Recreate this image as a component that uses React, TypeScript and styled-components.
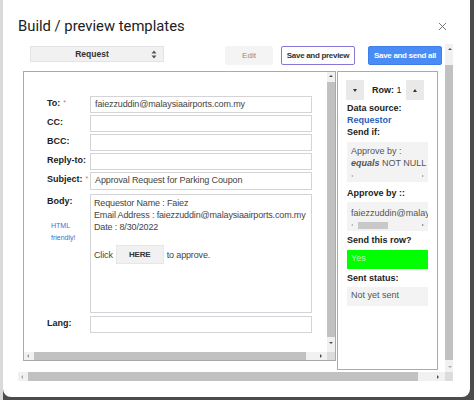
import styled, { createGlobalStyle } from 'styled-components';
import { X } from 'lucide-react';

const GlobalStyle = createGlobalStyle`
  html, body { margin: 0; padding: 0; }
  body {
    background: #4c4c4c;
    font-family: "Liberation Sans", Arial, sans-serif;
  }
`

type Dir = 'up' | 'down' | 'left' | 'right';

const Page = styled.div`
  width: 474px;
  height: 400px;
  overflow: hidden;
  display: flex;
  background: linear-gradient(to right, #d9d9d9 0 3px, #4c4c4c 3px);
`
const Dialog = styled.div`
  margin-left: 3px;
  width: 467px;
  height: 397px;
  background: #fff;
  border-radius: 0 0 8px 8px;
  display: flex;
  flex-direction: column;
`
const Header = styled.div`
  height: 44px;
  box-sizing: border-box;
  padding: 8px 21px 0 15px;
  display: flex;
  align-items: center;
  justify-content: space-between;
`
const Title = styled.div`
  font-family: Roboto, "Liberation Sans", sans-serif;
  font-size: 14.8px;
  color: #202124;
`
const Close = styled.div`
  display: flex;
  color: #5f6368;
`

const ScrollFrame = styled.div`
  margin-left: 15px;
  width: 435px;
  height: 337px;
  display: grid;
  grid-template-columns: 427px 8px;
  grid-template-rows: 328px 9px;
`
const Content = styled.div`
  padding-top: 2px;
  overflow: hidden;
`
const Toolbar = styled.div`
  display: flex;
  align-items: flex-start;
  height: 19px;
`
const Select = styled.div`
  margin-left: 12px;
  width: 134px;
  height: 16px;
  box-sizing: border-box;
  background: #f1f1f1;
  border: 1px solid #e3e3e3;
  display: flex;
  align-items: center;
  font-size: 8.5px;
  font-weight: bold;
  color: #333;
`
const SelectText = styled.span`
  flex: 1;
  text-align: center;
  padding-left: 2px;
`
const Spinner = styled.svg`
  margin-right: 6px;
`
const Button = styled.div<{ $kind: 'plain' | 'outline' | 'primary'; $gap: number }>`
  margin-left: ${p => p.$gap}px;
  width: ${p => (p.$kind === 'plain' ? 48 : 74)}px;
  height: 19px;
  box-sizing: border-box;
  display: flex;
  align-items: center;
  justify-content: center;
  font-size: 8px;
  letter-spacing: ${p => (p.$kind === 'plain' ? 0 : -0.3)}px;
  font-weight: ${p => (p.$kind === 'plain' ? 'normal' : 'bold')};
  color: ${p => (p.$kind === 'plain' ? '#8a8a8a' : p.$kind === 'primary' ? '#fff' : '#333')};
  background: ${p => (p.$kind === 'plain' ? '#f4f4f4' : p.$kind === 'primary' ? '#4a8cf5' : '#fff')};
  border: 1px solid ${p => (p.$kind === 'plain' ? '#f4f4f4' : p.$kind === 'primary' ? '#3f7fe8' : '#8579d6')};
  border-radius: 2px;
  white-space: nowrap;
`
const Panels = styled.div`
  margin-top: 6px;
  padding-left: 5px;
  display: flex;
  align-items: flex-start;
`

const LeftPanel = styled.div`
  width: 313px;
  height: 290px;
  box-sizing: border-box;
  border: 1px solid #aaa;
  display: grid;
  grid-template-columns: 303px 8px;
  grid-template-rows: 280px 8px;
`
const Form = styled.div`
  padding: 24px 0 0 23px;
  display: flex;
  flex-direction: column;
  gap: 2px;
  overflow: hidden;
`
const Row = styled.div<{ $top?: number }>`
  display: flex;
  margin-top: ${p => p.$top ?? 0}px;
`
const LabelCol = styled.div`
  width: 43px;
  display: flex;
  flex-direction: column;
`
const Label = styled.div`
  font-size: 9px;
  font-weight: bold;
  color: #222;
  line-height: 14px;
  white-space: nowrap;
`
const Req = styled.span`
  color: #e06666;
  font-weight: normal;
  font-size: 7px;
  vertical-align: top;
  margin-left: 3px;
`
const Hint = styled.div`
  margin-top: 12px;
  padding-left: 4px;
  font-size: 7px;
  line-height: 12px;
  color: #3b6fd6;
`
const Input = styled.div<{ $h?: number }>`
  width: 222px;
  height: ${p => p.$h ?? 17}px;
  box-sizing: border-box;
  border: 1px solid #d3d3d8;
  padding: 0 4px;
  font-size: 9px;
  letter-spacing: -0.12px;
  line-height: 15px;
  color: #444;
  white-space: nowrap;
  overflow: hidden;
`
const BodyBox = styled.div`
  width: 222px;
  height: 119px;
  box-sizing: border-box;
  border: 1px solid #d3d3d8;
  padding: 2px 3px;
  font-size: 9px;
  letter-spacing: -0.15px;
  line-height: 12px;
  color: #444;
  white-space: nowrap;
  overflow: hidden;
`
const ClickRow = styled.div`
  margin-top: 12px;
  display: flex;
  align-items: center;
`
const HereBtn = styled.span`
  margin: 0 3px;
  width: 48px;
  height: 19px;
  display: inline-flex;
  align-items: center;
  justify-content: center;
  background: #f1f1f1;
  border: 1px solid #e6e6e6;
  box-sizing: border-box;
  font-size: 8px;
  font-weight: bold;
  color: #333;
`

const RightPanel = styled.div`
  margin-left: 1px;
  width: 101px;
  height: 299px;
  box-sizing: border-box;
  border: 1px solid #aaa;
  padding: 8px 9px 0 9px;
  display: flex;
  flex-direction: column;
`
const Nav = styled.div`
  display: flex;
  align-items: center;
  margin-left: -1px;
`
const NavBtn = styled.div`
  flex: none;
  width: 18px;
  height: 20px;
  background: #e9e9e9;
  display: flex;
  align-items: center;
  justify-content: center;
`
const RowText = styled.div`
  margin: 0 4px 0 8px;
  font-size: 9px;
  color: #222;
  white-space: nowrap;
  b { font-weight: bold; }
`
const Field = styled.div<{ $top?: number; $blue?: boolean }>`
  margin-top: ${p => p.$top ?? 0}px;
  font-size: 9px;
  font-weight: bold;
  line-height: 12px;
  color: ${p => (p.$blue ? '#1f5fbf' : '#222')};
  white-space: nowrap;
`
const Box = styled.div<{ $top?: number; $pad?: number; $green?: boolean }>`
  margin-top: ${p => p.$top ?? 3}px;
  background: ${p => (p.$green ? '#00ff00' : '#f3f3f3')};
  padding: ${p => p.$pad ?? 0}px 4px 2px 4px;
  font-size: 9px;
  line-height: 12px;
  color: ${p => (p.$green ? '#bff7bf' : '#555')};
  white-space: nowrap;
  overflow: hidden;
`
const Single = styled.div`
  height: 17px;
  line-height: 17px;
`
const MiniScroll = styled.div<{ $top: number }>`
  margin-top: ${p => p.$top}px;
  height: 8px;
  display: flex;
  align-items: center;
`
const MiniThumb = styled.div`
  margin-left: 5px;
  width: 30px;
  height: 7px;
  background: #c8c8c8;
`
const Grow = styled.div`
  flex: 1;
`

const Track = styled.div<{ $vertical?: boolean }>`
  background: #f1f1f1;
  display: flex;
  flex-direction: ${p => (p.$vertical ? 'column' : 'row')};
  align-items: ${p => (p.$vertical ? 'stretch' : 'center')};
`
const ArrowBox = styled.div<{ $size?: number }>`
  flex: none;
  width: ${p => p.$size ?? 8}px;
  height: ${p => p.$size ?? 8}px;
  display: flex;
  align-items: center;
  justify-content: center;
`
const Thumb = styled.div<{ $vertical?: boolean; $len: number; $before: number }>`
  flex: none;
  background: #c1c1c1;
  ${p =>
    p.$vertical
      ? `height: ${p.$len}px; margin-top: ${p.$before}px;`
      : `width: ${p.$len}px; height: 100%; margin-left: ${p.$before}px;`}
`
const Corner = styled.div`
  background: #dcdcdc;
`
const Tri = styled.span<{ $dir: Dir; $color?: string; $s?: number }>`
  width: 0;
  height: 0;
  border: ${p => p.$s ?? 2.5}px solid transparent;
  ${p => {
    const c = p.$color ?? '#505050';
    const s = (p.$s ?? 2.5) + 0.5;
    if (p.$dir === 'up') return `border-top: 0; border-bottom: ${s}px solid ${c};`;
    if (p.$dir === 'down') return `border-bottom: 0; border-top: ${s}px solid ${c};`;
    if (p.$dir === 'left') return `border-left: 0; border-right: ${s}px solid ${c};`;
    return `border-right: 0; border-left: ${s}px solid ${c};`;
  }}
`

const App = () => {
  return (
    <>
      <GlobalStyle />
      <Page>
        <Dialog>
          <Header>
            <Title>Build / preview templates</Title>
            <Close><X size={13} strokeWidth={1.6} /></Close>
          </Header>

          <ScrollFrame>
            <Content>
              <Toolbar>
                <Select>
                  <SelectText>Request</SelectText>
                  <Spinner width="6" height="9" viewBox="0 0 6 9">
                    <path d="M3 0.5 L5.5 3.5 H0.5 Z M3 8.5 L5.5 5.5 H0.5 Z" fill="#555" />
                  </Spinner>
                </Select>
                <Button $kind="plain" $gap={61}>Edit</Button>
                <Button $kind="outline" $gap={8}>Save and preview</Button>
                <Button $kind="primary" $gap={13}>Save and send all</Button>
              </Toolbar>

              <Panels>
                <LeftPanel>
                  <Form>
                    <Row>
                      <LabelCol><Label>To:<Req>*</Req></Label></LabelCol>
                      <Input>faiezzuddin@malaysiaairports.com.my</Input>
                    </Row>
                    <Row>
                      <LabelCol><Label>CC:</Label></LabelCol>
                      <Input />
                    </Row>
                    <Row>
                      <LabelCol><Label>BCC:</Label></LabelCol>
                      <Input />
                    </Row>
                    <Row>
                      <LabelCol><Label>Reply-to:</Label></LabelCol>
                      <Input />
                    </Row>
                    <Row>
                      <LabelCol><Label>Subject:<Req>*</Req></Label></LabelCol>
                      <Input $h={18}>Approval Request for Parking Coupon</Input>
                    </Row>
                    <Row $top={2}>
                      <LabelCol>
                        <Label>Body:</Label>
                        <Hint>HTML<br />friendly!</Hint>
                      </LabelCol>
                      <BodyBox>
                        <div>Requestor Name : Faiez</div>
                        <div>Email Address : faiezzuddin@malaysiaairports.com.my</div>
                        <div>Date : 8/30/2022</div>
                        <ClickRow>
                          Click <HereBtn>HERE</HereBtn> to approve.
                        </ClickRow>
                      </BodyBox>
                    </Row>
                    <Row $top={1}>
                      <LabelCol><Label>Lang:</Label></LabelCol>
                      <Input />
                    </Row>
                  </Form>
                  <Track $vertical>
                    <ArrowBox><Tri $dir="up" $s={2} /></ArrowBox>
                    <Thumb $vertical $len={255} $before={2} />
                    <ArrowBox style={{ marginTop: 2 }}><Tri $dir="down" $s={2} /></ArrowBox>
                  </Track>
                  <Track>
                    <ArrowBox><Tri $dir="left" $s={2} $color="#999" /></ArrowBox>
                    <Thumb $len={272} $before={2} />
                    <Grow />
                    <ArrowBox><Tri $dir="right" $s={2} /></ArrowBox>
                    <div style={{ width: 2 }} />
                  </Track>
                  <Corner />
                </LeftPanel>

                <RightPanel>
                  <Nav>
                    <NavBtn><Tri $dir="down" $s={2.5} $color="#333" /></NavBtn>
                    <RowText><b>Row:</b> 1</RowText>
                    <NavBtn><Tri $dir="up" $s={2.5} $color="#333" /></NavBtn>
                  </Nav>
                  <Field $top={2}>Data source:</Field>
                  <Field $blue>Requestor</Field>
                  <Field>Send if:</Field>
                  <Box $top={4} $pad={3}>
                    <div>Approve by :</div>
                    <div><b><i>equals</i></b> NOT NULL</div>
                    <MiniScroll $top={3}>
                      <Tri $dir="left" $s={1.5} $color="#aaa" />
                      <Grow />
                      <Tri $dir="right" $s={1.5} $color="#999" />
                    </MiniScroll>
                  </Box>
                  <Field $top={5}>Approve by ::</Field>
                  <Box $top={3} $pad={5}>
                    <div>faiezzuddin@malaysiaairports.com.my</div>
                    <MiniScroll $top={2}>
                      <Tri $dir="left" $s={1.5} $color="#aaa" />
                      <MiniThumb />
                      <Grow />
                      <Tri $dir="right" $s={1.5} $color="#777" />
                    </MiniScroll>
                  </Box>
                  <Field $top={3}>Send this row?</Field>
                  <Box $top={4} $green><Single>Yes</Single></Box>
                  <Field $top={3}>Sent status:</Field>
                  <Box $top={3}><Single>Not yet sent</Single></Box>
                </RightPanel>
              </Panels>
            </Content>

            <Track $vertical>
              <ArrowBox $size={10}><Tri $dir="up" $s={2} $color="#555" /></ArrowBox>
              <Thumb $vertical $len={295} $before={11} />
              <ArrowBox $size={10} style={{ marginTop: 2 }}><Tri $dir="down" $s={2} $color="#aaa" /></ArrowBox>
            </Track>
            <Track>
              <ArrowBox><Tri $dir="left" $s={2} $color="#aaa" /></ArrowBox>
              <Thumb $len={390} $before={2} />
              <Grow />
              <ArrowBox><Tri $dir="right" $s={2} /></ArrowBox>
              <div style={{ width: 3 }} />
            </Track>
            <Corner />
          </ScrollFrame>
        </Dialog>
      </Page>
    </>
  )
}

export default App
